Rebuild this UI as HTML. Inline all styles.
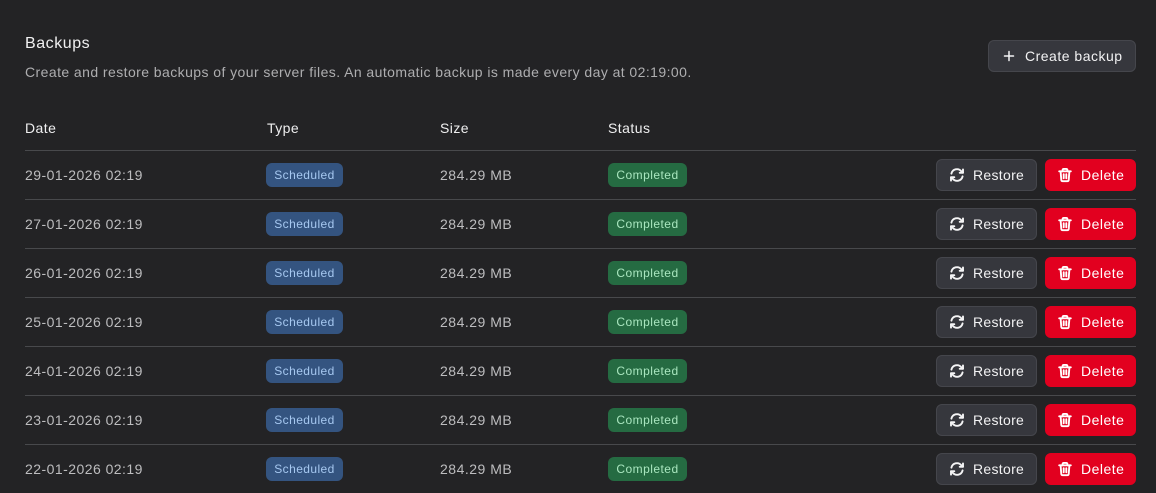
<!DOCTYPE html>
<html><head><meta charset="utf-8">
<style>
html,body{margin:0;padding:0;background:#232325;width:1156px;height:493px;overflow:hidden;font-family:"Liberation Sans",sans-serif}
.t{position:absolute;white-space:nowrap;line-height:20px}
.row{position:absolute;left:25px;width:1111px;height:49px;border-top:1px solid #48494c;box-sizing:border-box}
.d{left:0;top:14px;font-size:14px;color:#bdbdbf;letter-spacing:.46px}
.s{left:415px;top:14px;font-size:14px;color:#bdbdbf;letter-spacing:.5px}
.b{position:absolute;top:12px;height:24px;border-radius:6px;box-sizing:border-box;font-size:12px;line-height:25px;text-align:center}
.sch{left:241px;width:77px;background:#345480;color:#a6c8f0;letter-spacing:.42px}
.com{left:583px;width:79px;background:#256b42;color:#a9e6bf;letter-spacing:.46px}
.btn{position:absolute;top:8px;height:32px;border-radius:6px;box-sizing:border-box;font-size:14px;line-height:30px;white-space:nowrap}
.btn span{position:absolute;top:0}
.btn svg{position:absolute;left:13px;top:7px}
.re{left:911px;width:101px;background:#36373d;border:1px solid #45464c;color:#f2f2f3}
.re svg{left:12px}
.re span{left:36px;letter-spacing:.3px}
.de{left:1020px;width:91px;background:#e2001f;border:1px solid #e2001f;color:#fff}
.de svg{left:11px}
.de span{left:35px;letter-spacing:.5px}
</style></head><body>
<svg width="0" height="0" style="position:absolute"><defs>
<symbol id="r" viewBox="0 0 16 16"><g fill="none" stroke="#f4f4f5" stroke-width="1.9" stroke-linecap="round" stroke-linejoin="round"><path d="M2.4 6.6A5.7 5.7 0 0 1 12.3 4.2L14 5.6"/><path d="M14 2.4V5.8H10.7"/><path d="M13.6 9.4A5.7 5.7 0 0 1 3.7 11.8L2 10.4"/><path d="M2 13.6V10.2H5.3"/></g></symbol>
<symbol id="x" viewBox="0 0 16 16"><g fill="none" stroke="#fff" stroke-width="1.9" stroke-linecap="round" stroke-linejoin="round"><path d="M2.2 4.3H13.8"/><path d="M5.6 4.3V3A1.2 1.2 0 0 1 6.8 1.9H9.2A1.2 1.2 0 0 1 10.4 3V4.3"/><path d="M3.6 4.3L4.3 13A1.4 1.4 0 0 0 5.7 14.2H10.3A1.4 1.4 0 0 0 11.7 13L12.4 4.3"/><path d="M6.7 7.2V11.3"/><path d="M9.3 7.2V11.3"/></g></symbol>
</defs></svg>

<div class="t" style="left:25px;top:33px;font-size:16px;line-height:21px;color:#f0f0f1;letter-spacing:.55px">Backups</div>
<div class="t" style="left:25px;top:62px;font-size:14px;color:#aeaeb0;letter-spacing:.43px">Create and restore backups of your server files. An automatic backup is made every day at 02:19:00.</div>

<div style="position:absolute;left:988px;top:40px;width:148px;height:32px;border-radius:6px;background:#36373d;border:1px solid #45464c;box-sizing:border-box">
<svg style="position:absolute;left:12px;top:7px" width="16" height="16" viewBox="0 0 16 16"><path d="M8 3.5V12.5M3.5 8H12.5" stroke="#f4f4f5" stroke-width="1.5" stroke-linecap="round"/></svg>
<span class="t" style="left:36px;top:5px;font-size:14px;color:#f2f2f3;letter-spacing:.5px">Create backup</span></div>

<div class="t" style="left:25px;top:118px;font-size:14px;color:#efeff0;letter-spacing:.45px">Date</div>
<div class="t" style="left:267px;top:118px;font-size:14px;color:#efeff0;letter-spacing:.45px">Type</div>
<div class="t" style="left:440px;top:118px;font-size:14px;color:#efeff0;letter-spacing:.45px">Size</div>
<div class="t" style="left:608px;top:118px;font-size:14px;color:#efeff0;letter-spacing:.45px">Status</div>

<div class="row" style="top:150px"><div class="t d">29-01-2026 02:19</div><div class="b sch">Scheduled</div><div class="t s">284.29 MB</div><div class="b com">Completed</div><div class="btn re"><svg width="16" height="16"><use href="#r"/></svg><span>Restore</span></div><div class="btn de"><svg width="16" height="16"><use href="#x"/></svg><span>Delete</span></div></div>
<div class="row" style="top:199px"><div class="t d">27-01-2026 02:19</div><div class="b sch">Scheduled</div><div class="t s">284.29 MB</div><div class="b com">Completed</div><div class="btn re"><svg width="16" height="16"><use href="#r"/></svg><span>Restore</span></div><div class="btn de"><svg width="16" height="16"><use href="#x"/></svg><span>Delete</span></div></div>
<div class="row" style="top:248px"><div class="t d">26-01-2026 02:19</div><div class="b sch">Scheduled</div><div class="t s">284.29 MB</div><div class="b com">Completed</div><div class="btn re"><svg width="16" height="16"><use href="#r"/></svg><span>Restore</span></div><div class="btn de"><svg width="16" height="16"><use href="#x"/></svg><span>Delete</span></div></div>
<div class="row" style="top:297px"><div class="t d">25-01-2026 02:19</div><div class="b sch">Scheduled</div><div class="t s">284.29 MB</div><div class="b com">Completed</div><div class="btn re"><svg width="16" height="16"><use href="#r"/></svg><span>Restore</span></div><div class="btn de"><svg width="16" height="16"><use href="#x"/></svg><span>Delete</span></div></div>
<div class="row" style="top:346px"><div class="t d">24-01-2026 02:19</div><div class="b sch">Scheduled</div><div class="t s">284.29 MB</div><div class="b com">Completed</div><div class="btn re"><svg width="16" height="16"><use href="#r"/></svg><span>Restore</span></div><div class="btn de"><svg width="16" height="16"><use href="#x"/></svg><span>Delete</span></div></div>
<div class="row" style="top:395px"><div class="t d">23-01-2026 02:19</div><div class="b sch">Scheduled</div><div class="t s">284.29 MB</div><div class="b com">Completed</div><div class="btn re"><svg width="16" height="16"><use href="#r"/></svg><span>Restore</span></div><div class="btn de"><svg width="16" height="16"><use href="#x"/></svg><span>Delete</span></div></div>
<div class="row" style="top:444px"><div class="t d">22-01-2026 02:19</div><div class="b sch">Scheduled</div><div class="t s">284.29 MB</div><div class="b com">Completed</div><div class="btn re"><svg width="16" height="16"><use href="#r"/></svg><span>Restore</span></div><div class="btn de"><svg width="16" height="16"><use href="#x"/></svg><span>Delete</span></div></div>
</body></html>
